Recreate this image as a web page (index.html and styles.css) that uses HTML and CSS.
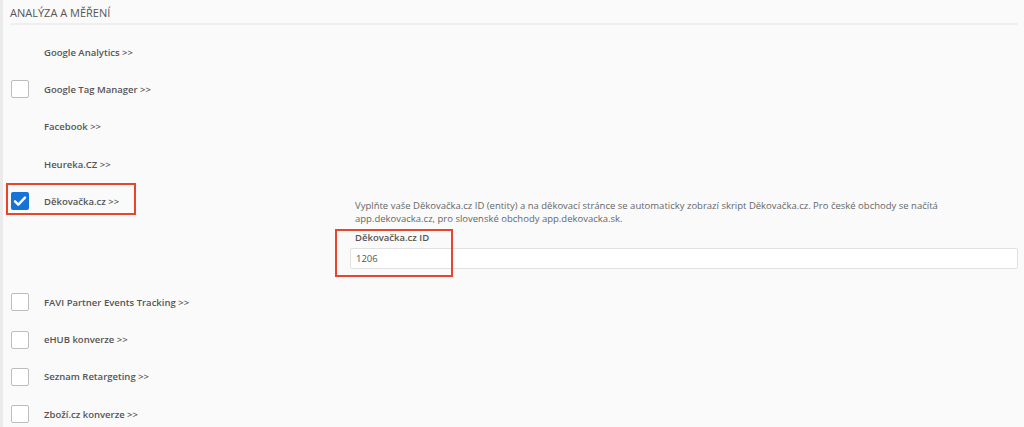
FILE: index.html
```html
<!DOCTYPE html>
<html lang="cs">
<head>
<meta charset="utf-8">
<title>Analýza a měření</title>
<link rel="stylesheet" href="styles.css">
</head>
<body>
<div class="page">
  <div class="section-head">Analýza a měření</div>
  <div class="list">
    <div class="row"><span class="check none"></span><span class="label">Google Analytics &gt;&gt;</span></div>
    <div class="row"><span class="check"></span><span class="label">Google Tag Manager &gt;&gt;</span></div>
    <div class="row"><span class="check none"></span><span class="label">Facebook &gt;&gt;</span></div>
    <div class="row"><span class="check none"></span><span class="label">Heureka.CZ &gt;&gt;</span></div>
    <div class="row row-open">
      <div class="row-main">
        <span class="check checked"><svg viewBox="0 0 18 18" width="18" height="18"><path d="M4 9.3l3.3 3.3L14 5.6" fill="none" stroke="#fff" stroke-width="2.4" stroke-linecap="round" stroke-linejoin="round"/></svg></span>
        <span class="label">Děkovačka.cz &gt;&gt;</span>
        <span class="mark mark-row"></span>
      </div>
      <div class="panel">
        <p class="desc">Vyplňte vaše Děkovačka.cz ID (entity) a na děkovací stránce se automaticky zobrazí skript Děkovačka.cz. Pro české obchody se načítá app.dekovacka.cz, pro slovenské obchody app.dekovacka.sk.</p>
        <div class="field">
          <label class="field-label">Děkovačka.cz ID</label>
          <div class="input">1206</div>
          <span class="mark mark-field"></span>
        </div>
      </div>
    </div>
    <div class="row"><span class="check"></span><span class="label">FAVI Partner Events Tracking &gt;&gt;</span></div>
    <div class="row"><span class="check"></span><span class="label">eHUB konverze &gt;&gt;</span></div>
    <div class="row"><span class="check"></span><span class="label">Seznam Retargeting &gt;&gt;</span></div>
    <div class="row"><span class="check"></span><span class="label">Zboží.cz konverze &gt;&gt;</span></div>
  </div>
</div>
</body>
</html>
```

FILE: styles.css
```css
html, body {
  margin: 0;
  padding: 0;
  background: #fafafa;
}
body {
  font-family: "Open Sans", "Liberation Sans", sans-serif;
  color: #555;
  overflow: hidden;
  height: 427px;
}
.page {
  border-left: 3px solid #ebebeb;
  min-height: 427px;
  box-sizing: border-box;
  padding: 0 6px 0 7px;
}
.section-head {
  text-transform: uppercase;
  font-size: 11px;
  color: #555;
  padding-top: 6px;
  height: 17px;
  line-height: 14px;
  border-bottom: 2px solid #efefef;
}
.list {
  padding-top: 8.5px;
}
.row {
  display: flex;
  align-items: center;
  height: 37.3px;
}
.row-main {
  position: relative;
  display: flex;
  align-items: center;
  width: 340px;
  height: 37.3px;
  flex: none;
  align-self: flex-start;
}
.row-open {
  height: 101px;
  align-items: flex-start;
}
.check {
  width: 16px;
  height: 16px;
  border: 1px solid #bdbdbd;
  border-radius: 2px;
  background: #fff;
  margin-left: 1px;
  margin-right: 15px;
  flex: none;
  box-sizing: content-box;
}
.check.none {
  visibility: hidden;
}
.check.checked {
  width: 18px;
  height: 18px;
  border: none;
  background: #1673d8;
  display: flex;
}
.label {
  font-size: 9.5px;
  font-weight: 600;
  color: #555;
}
.panel {
  flex: 1;
  padding-top: 16px;
}
.desc {
  margin: 0 0 0 5px;
  font-size: 9.5px;
  line-height: 13px;
  color: #666;
  max-width: 600px;
}
.field {
  position: relative;
  margin-top: 6px;
}
.field-label {
  display: block;
  margin-left: 5px;
  font-size: 9.5px;
  font-weight: 600;
  color: #555;
  line-height: 14px;
}
.input {
  margin-top: 3px;
  height: 21px;
  box-sizing: border-box;
  border: 1px solid #e1e1e1;
  border-radius: 2px;
  background: #fff;
  font-size: 9.5px;
  line-height: 19px;
  padding-left: 5px;
  color: #555;
}
.mark {
  position: absolute;
  border: 2px solid #e8452c;
  box-sizing: border-box;
  pointer-events: none;
}
.mark-row {
  left: -4px;
  top: 0.75px;
  width: 130px;
  height: 32px;
}
.mark-field {
  left: -15px;
  top: -2px;
  width: 118px;
  height: 48px;
}
```
